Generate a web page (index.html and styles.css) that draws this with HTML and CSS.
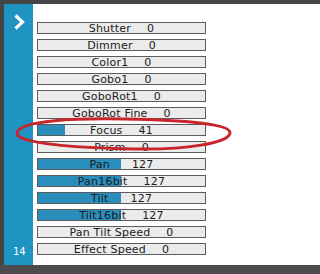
FILE: index.html
```html
<!DOCTYPE html>
<html>
<head>
<meta charset="utf-8">
<link rel="stylesheet" href="styles.css">
</head>
<body>
<div class="frame">
  <div class="main">
    <aside class="sidebar">
      <svg class="chev" width="12" height="16" viewBox="0 0 12 16"><path d="M2.5 1.5 L9.5 8 L2.5 14.5" fill="none" stroke="#fff" stroke-width="3.2"/></svg>
      <span class="num">14</span>
    </aside>
    <section class="panel">
      <div class="bar"><span class="txt">Shutter<span class="val">0</span></span></div>
      <div class="bar"><span class="txt">Dimmer<span class="val">0</span></span></div>
      <div class="bar"><span class="txt">Color1<span class="val">0</span></span></div>
      <div class="bar"><span class="txt">Gobo1<span class="val">0</span></span></div>
      <div class="bar"><span class="txt">GoboRot1<span class="val">0</span></span></div>
      <div class="bar"><span class="txt">GoboRot Fine<span class="val">0</span></span></div>
      <div class="bar"><div class="fill" style="width:16%"></div><span class="txt">Focus<span class="val">41</span></span></div>
      <div class="bar"><span class="txt">Prism<span class="val">0</span></span></div>
      <div class="bar"><div class="fill" style="width:49.8%"></div><span class="txt">Pan<span class="val wide">127</span></span></div>
      <div class="bar"><div class="fill" style="width:49.8%"></div><span class="txt">Pan16bit<span class="val">127</span></span></div>
      <div class="bar"><div class="fill" style="width:49.8%"></div><span class="txt">Tilt<span class="val wide">127</span></span></div>
      <div class="bar"><div class="fill" style="width:49.8%"></div><span class="txt">Tilt16bit<span class="val">127</span></span></div>
      <div class="bar"><span class="txt">Pan Tilt Speed<span class="val">0</span></span></div>
      <div class="bar"><span class="txt">Effect Speed<span class="val">0</span></span></div>
    </section>
  </div>
  <div class="bottom"></div>
  <svg class="mark" width="243" height="274" viewBox="0 0 243 274">
    <path d="M17 133 C 19 120 80 118 125 119 C 185 120 231 124 230 133 C 229 143 185 150 135 149 C 75 148 15 143 17 133 Z" fill="none" stroke="#c9262c" stroke-width="3"/>
  </svg>
</div>
</body>
</html>
```

FILE: styles.css
```css
html, body {
  margin: 0;
  padding: 0;
  background: #4c4c4c;
}
.frame {
  position: relative;
  width: 100%;
  min-width: 243px;
  height: 274px;
  background: #454545;
  padding: 4px 0 0 4px;
  box-sizing: border-box;
  display: flex;
  flex-direction: column;
  font-family: "DejaVu Sans", Verdana, sans-serif;
  overflow: hidden;
}
.main {
  display: flex;
  height: 261px;
}
.sidebar {
  width: 29px;
  flex: none;
  background: #1f93c1;
  display: flex;
  flex-direction: column;
  justify-content: space-between;
  padding: 10px 0 8px 9px;
  box-sizing: border-box;
}
.chev {
  display: block;
}
.num {
  color: #fff;
  font-size: 10px;
  line-height: 10px;
}
.panel {
  flex: 1;
  background: #fff;
  padding: 18px 0 0 4px;
  display: flex;
  flex-direction: column;
  gap: 5px;
}
.bar {
  position: relative;
  width: 169px;
  height: 12px;
  box-sizing: border-box;
  border: 1px solid #5b5b5b;
  background: #ebebeb;
  display: flex;
  align-items: center;
  justify-content: center;
}
.fill {
  position: absolute;
  left: 0;
  top: 0;
  bottom: 0;
  background: #2a8ebd;
}
.txt {
  position: relative;
  font-size: 11px;
  line-height: 11px;
  color: #1b1b1b;
  white-space: pre;
  letter-spacing: 0.2px;
}
.val {
  margin-left: 16px;
}
.val.wide {
  margin-left: 22px;
}
.bottom {
  flex: 1;
  margin-left: -4px;
  background: #4c4c4c;
}
.mark {
  position: absolute;
  left: 0;
  top: 0;
  pointer-events: none;
}
```
